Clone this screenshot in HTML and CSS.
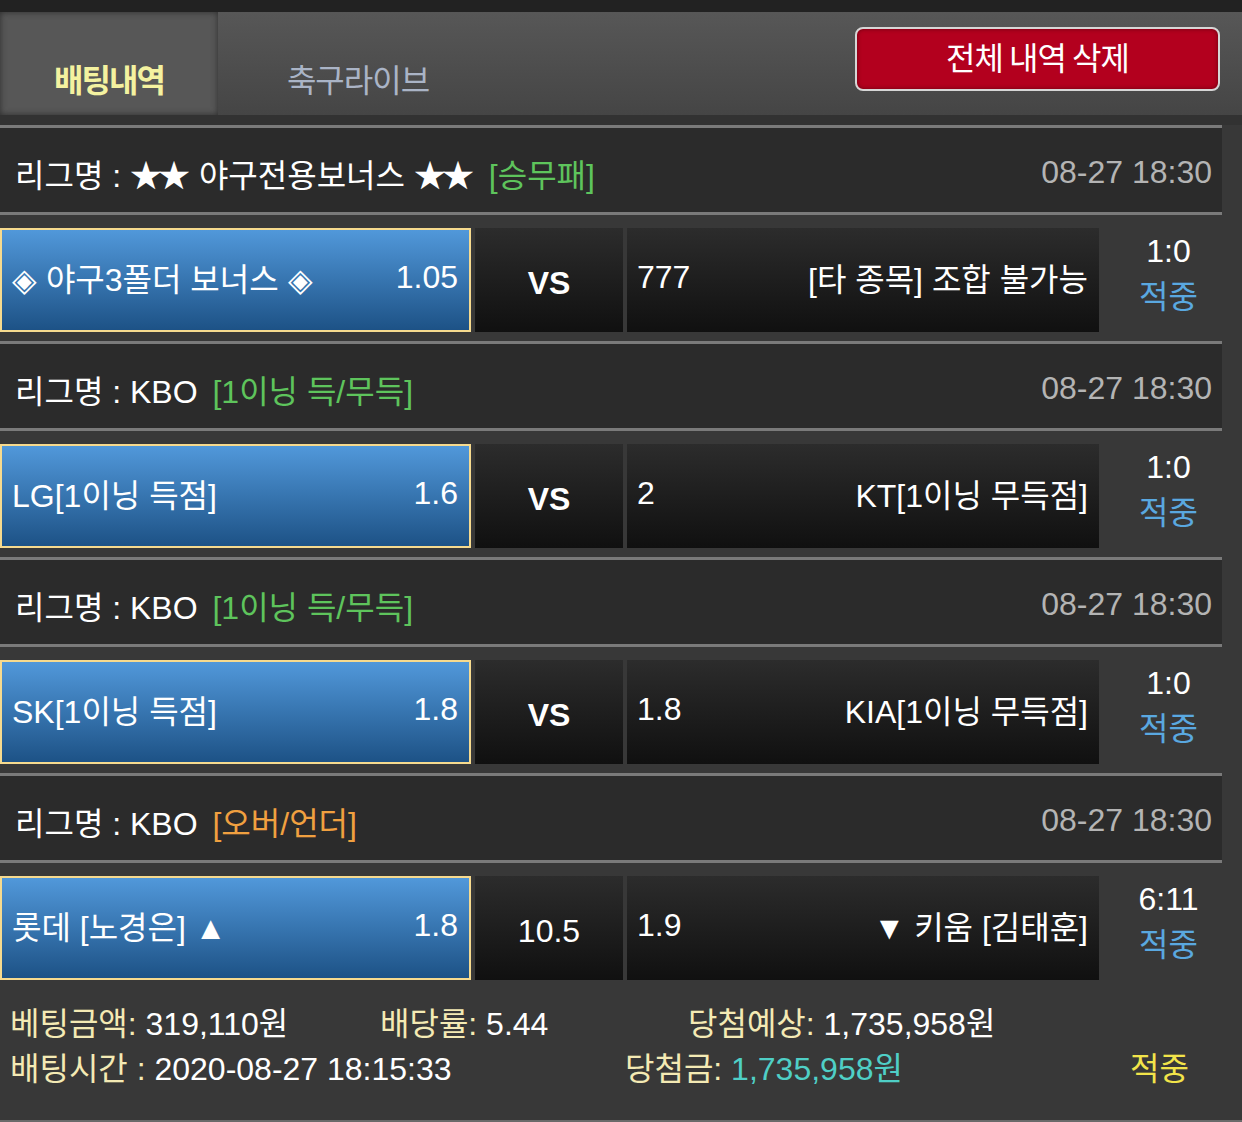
FILE: index.html
```html
<!DOCTYPE html>
<html>
<head>
    <meta charset="utf-8">
    <title>배팅내역</title>
    <meta name="viewport" content="width=device-width, initial-scale=1">
    <link rel="stylesheet" href="styles.css">
</head>
<body>

<div id="page-wrapper">
    <div id="tab-bar">
        <div class="tab tab-active">배팅내역</div>
        <div class="tab">축구라이브</div>
        <button class="btn-clear">전체 내역 삭제</button>
    </div>
    <div id="tab-gap"></div>

    <div id="bet-list">
        <div class="bet">
            <div class="league">
                <span class="league-name">리그명 : <span class="stars">★★</span> 야구전용보너스 <span class="stars">★★</span> <span class="tag tag-green">[승무패]</span></span>
                <span class="date">08-27 18:30</span>
            </div>
            <div class="match">
                <div class="cell pick"><span>◈ 야구3폴더 보너스 ◈</span><span>1.05</span></div>
                <div class="cell vs">VS</div>
                <div class="cell away"><span>777</span><span>[타 종목] 조합 불가능</span></div>
                <div class="result"><div>1:0</div><div class="hit">적중</div></div>
            </div>
        </div>

        <div class="bet">
            <div class="league">
                <span class="league-name">리그명 : KBO <span class="tag tag-green">[1이닝 득/무득]</span></span>
                <span class="date">08-27 18:30</span>
            </div>
            <div class="match">
                <div class="cell pick"><span>LG[1이닝 득점]</span><span>1.6</span></div>
                <div class="cell vs">VS</div>
                <div class="cell away"><span>2</span><span>KT[1이닝 무득점]</span></div>
                <div class="result"><div>1:0</div><div class="hit">적중</div></div>
            </div>
        </div>

        <div class="bet">
            <div class="league">
                <span class="league-name">리그명 : KBO <span class="tag tag-green">[1이닝 득/무득]</span></span>
                <span class="date">08-27 18:30</span>
            </div>
            <div class="match">
                <div class="cell pick"><span>SK[1이닝 득점]</span><span>1.8</span></div>
                <div class="cell vs">VS</div>
                <div class="cell away"><span>1.8</span><span>KIA[1이닝 무득점]</span></div>
                <div class="result"><div>1:0</div><div class="hit">적중</div></div>
            </div>
        </div>

        <div class="bet">
            <div class="league">
                <span class="league-name">리그명 : KBO <span class="tag tag-orange">[오버/언더]</span></span>
                <span class="date">08-27 18:30</span>
            </div>
            <div class="match">
                <div class="cell pick"><span>롯데 [노경은] ▲</span><span>1.8</span></div>
                <div class="cell vs vs-line">10.5</div>
                <div class="cell away"><span>1.9</span><span>▼ 키움 [김태훈]</span></div>
                <div class="result"><div>6:11</div><div class="hit">적중</div></div>
            </div>
        </div>
    </div>

    <div id="summary">
        <div class="summary-row">
            <div class="item item-amount"><span class="label">베팅금액:</span> 319,110원</div>
            <div class="item item-rate"><span class="label">배당률:</span> 5.44</div>
            <div class="item"><span class="label">당첨예상:</span> 1,735,958원</div>
        </div>
        <div class="summary-row">
            <div class="item item-time"><span class="label">배팅시간 :</span> 2020-08-27 18:15:33</div>
            <div class="item item-win"><span class="label">당첨금:</span> <span class="win">1,735,958원</span></div>
            <div class="item status">적중</div>
        </div>
    </div>
</div>

</body>
</html>
```

FILE: styles.css
```css
html, body {
    margin: 0px;
    padding: 0px;
    background-color: #383838;
}

#page-wrapper {
    width: 1242px;
    font-family: "Liberation Sans", "Noto Sans CJK KR", sans-serif;
    font-size: 32px;
    color: #ffffff;
}

/* tabs */

#tab-bar {
    height: 103px;
    border-top: 12px solid #222222;
    display: flex;
    align-items: flex-start;
    background: linear-gradient(#575757, #454545);
}

.tab {
    height: 103px;
    box-sizing: border-box;
    padding-top: 45px;
    text-align: center;
    font-family: "Noto Sans CJK KR", sans-serif;
    font-size: 32px;
    line-height: 42px;
    letter-spacing: -2px;
    color: #aab4c6;
}

.tab-active {
    width: 218px;
    background-color: #575757;
    box-shadow: inset 0px 0px 6px #2c2c2c;
    font-weight: bold;
    color: #f4f2a0;
}

.tab + .tab {
    width: 280px;
    letter-spacing: -1px;
}

.btn-clear {
    margin: 15px 22px 0px auto;
    width: 365px;
    height: 64px;
    border: 2px solid #d6d6d6;
    border-radius: 8px;
    background-color: #b3001e;
    box-shadow: inset 0px 0px 4px #6a0010;
    font-family: "Noto Sans CJK KR", sans-serif;
    font-size: 32px;
    letter-spacing: -1px;
    color: #ffffff;
    padding: 0px 0px 6px 0px;
}

#tab-gap {
    height: 10px;
    background-color: #323232;
}

/* bets */

#bet-list {
    width: 1222px;
}

.league {
    height: 84px;
    box-sizing: border-box;
    border-top: 3px solid #7a7a7a;
    border-bottom: 3px solid #7a7a7a;
    background-color: #2b2b2b;
    display: flex;
    justify-content: space-between;
    align-items: center;
    padding: 5px 10px 0px 15px;
    height: 90px;
}

.stars {
    letter-spacing: -4px;
    margin-right: 4px;
}

.tag {
    margin-left: 6px;
}

.tag-green {
    color: #5ec45c;
}

.tag-orange {
    color: #f0a040;
}

.date {
    color: #b4b4b4;
}

.match {
    height: 126px;
    box-sizing: border-box;
    padding: 13px 0px 9px 0px;
    display: flex;
    gap: 4px;
}

.cell {
    height: 104px;
    box-sizing: border-box;
    display: flex;
    justify-content: space-between;
    align-items: center;
    background: linear-gradient(#2c2c2c, #101010);
}

.pick {
    width: 471px;
    padding: 0px 11px 6px 10px;
    border: 2px solid #f6da8e;
    background: linear-gradient(#5198da, #1d5286);
}

.vs {
    width: 148px;
    justify-content: center;
    font-weight: bold;
    padding-top: 6px;
}

.vs-line {
    font-weight: normal;
}

.away {
    width: 472px;
    padding: 0px 11px 6px 10px;
}

.result {
    flex: 1;
    padding-left: 12px;
    display: flex;
    flex-direction: column;
    align-items: center;
    line-height: 46px;
}

.hit {
    color: #5aa8e0;
}

/* summary */

#summary {
    height: 133px;
    box-sizing: border-box;
    padding: 13px 0px 0px 10px;
    border-bottom: 2px solid #6a6a6a;
}

.summary-row {
    display: flex;
    line-height: 45px;
}

.label {
    color: #f4eab4;
}

.item-amount {
    width: 370px;
}

.item-rate {
    width: 308px;
}

.item-time {
    width: 615px;
}

.item-win {
    width: 505px;
}

.win {
    color: #4fcfc6;
}

.status {
    color: #f2e44a;
}
```
